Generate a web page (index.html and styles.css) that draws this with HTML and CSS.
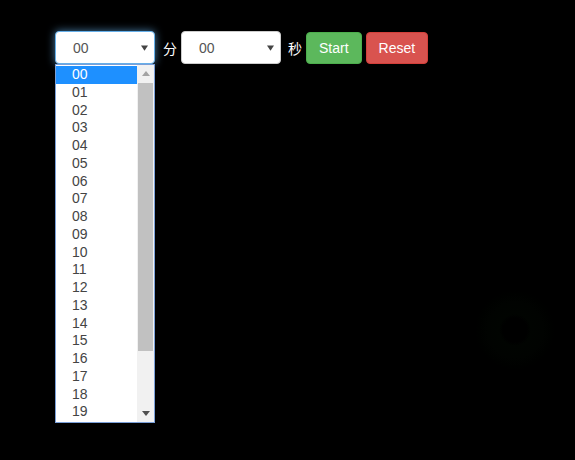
FILE: index.html
```html
<!DOCTYPE html>
<html lang="zh">
    <head>
        <meta charset="utf-8">
        <title>Timer</title>
        <link rel="stylesheet" href="styles.css">
    </head>
    <body>
        <div class="timer">
            <div class="picker">
                <div class="select focus">
                    <span>00</span>
                    <svg class="caret" viewBox="0 0 8 6"><polygon points="0,0 8,0 4,6"/></svg>
                </div>
                <div class="listbox">
                    <ul class="options">
                        <li class="selected">00</li>
                        <li>01</li><li>02</li><li>03</li><li>04</li><li>05</li>
                        <li>06</li><li>07</li><li>08</li><li>09</li><li>10</li>
                        <li>11</li><li>12</li><li>13</li><li>14</li><li>15</li>
                        <li>16</li><li>17</li><li>18</li><li>19</li>
                    </ul>
                    <div class="scrollbar">
                        <svg class="arrow up" viewBox="0 0 8 5"><polygon points="0,5 8,5 4,0"/></svg>
                        <div class="thumb"></div>
                        <svg class="arrow down" viewBox="0 0 8 5"><polygon points="0,0 8,0 4,5"/></svg>
                    </div>
                </div>
            </div>
            <span class="unit">分</span>
            <div class="select">
                <span>00</span>
                <svg class="caret" viewBox="0 0 8 6"><polygon points="0,0 8,0 4,6"/></svg>
            </div>
            <span class="unit">秒</span>
            <button class="btn start">Start</button>
            <button class="btn reset">Reset</button>
        </div>
        <div class="glow"></div>
    </body>
</html>
```

FILE: styles.css
```css
html, body {height: 100%}
body {
    margin: 0;
    background: #000;
    font-family: "Liberation Sans", Arial, "Noto Sans CJK SC", sans-serif;
    font-size: 14px;
    color: #555;
    position: relative;
    overflow: hidden;
}
.timer {
    display: flex;
    align-items: center;
    padding: 31px 0 0 55px;
}
.picker {
    position: relative;
}
.select {
    box-sizing: border-box;
    width: 100px;
    height: 33px;
    display: flex;
    align-items: center;
    justify-content: space-between;
    padding: 0 6px 0 17px;
    background: #fff;
    border: 1px solid #ccc;
    border-radius: 4px;
}
.select.focus {
    border-color: #66afe9;
    box-shadow: 0 0 8px rgba(102, 175, 233, 0.7);
}
.caret {
    width: 7px;
    height: 6px;
    fill: #444;
}
.unit {
    color: #fff;
    margin: 0 4px 0 8px;
}
.unit + .select + .unit {
    margin: 0 4px 0 7px;
}
.btn {
    height: 32px;
    padding: 0 12px;
    border: 1px solid transparent;
    border-radius: 4px;
    color: #fff;
    font: inherit;
    margin-right: 4px;
}
.start {
    background: #5cb85c;
    border-color: #4cae4c;
}
.reset {
    background: #d9534f;
    border-color: #d43f3a;
}
.listbox {
    position: absolute;
    left: 0;
    top: 33px;
    box-sizing: border-box;
    width: 100px;
    height: 359px;
    display: flex;
    background: #fff;
    border: 1px solid #7a9fd8;
}
.options {
    flex: 1;
    margin: 0;
    padding: 1px 0 0;
    list-style: none;
}
.options li {
    height: 17.75px;
    line-height: 17.75px;
    padding-left: 16px;
    color: #444;
}
.options li.selected {
    background: #1e90ff;
    color: #fff;
}
.scrollbar {
    width: 17px;
    background: #f1f1f1;
    display: flex;
    flex-direction: column;
    align-items: center;
}
.arrow {
    width: 8px;
    height: 5px;
    margin: 6px 0;
}
.arrow.up {
    fill: #a3a3a3;
}
.arrow.down {
    fill: #505050;
    margin-top: auto;
}
.thumb {
    width: 15px;
    height: 268px;
    margin-top: 1px;
    background: #c1c1c1;
}
.glow {
    position: absolute;
    left: 475px;
    top: 290px;
    width: 80px;
    height: 80px;
    border-radius: 50%;
    background: radial-gradient(circle, #000 0 12px, #010401 16px, #010301 28px, #000100 36px, #000 40px);
}
```
